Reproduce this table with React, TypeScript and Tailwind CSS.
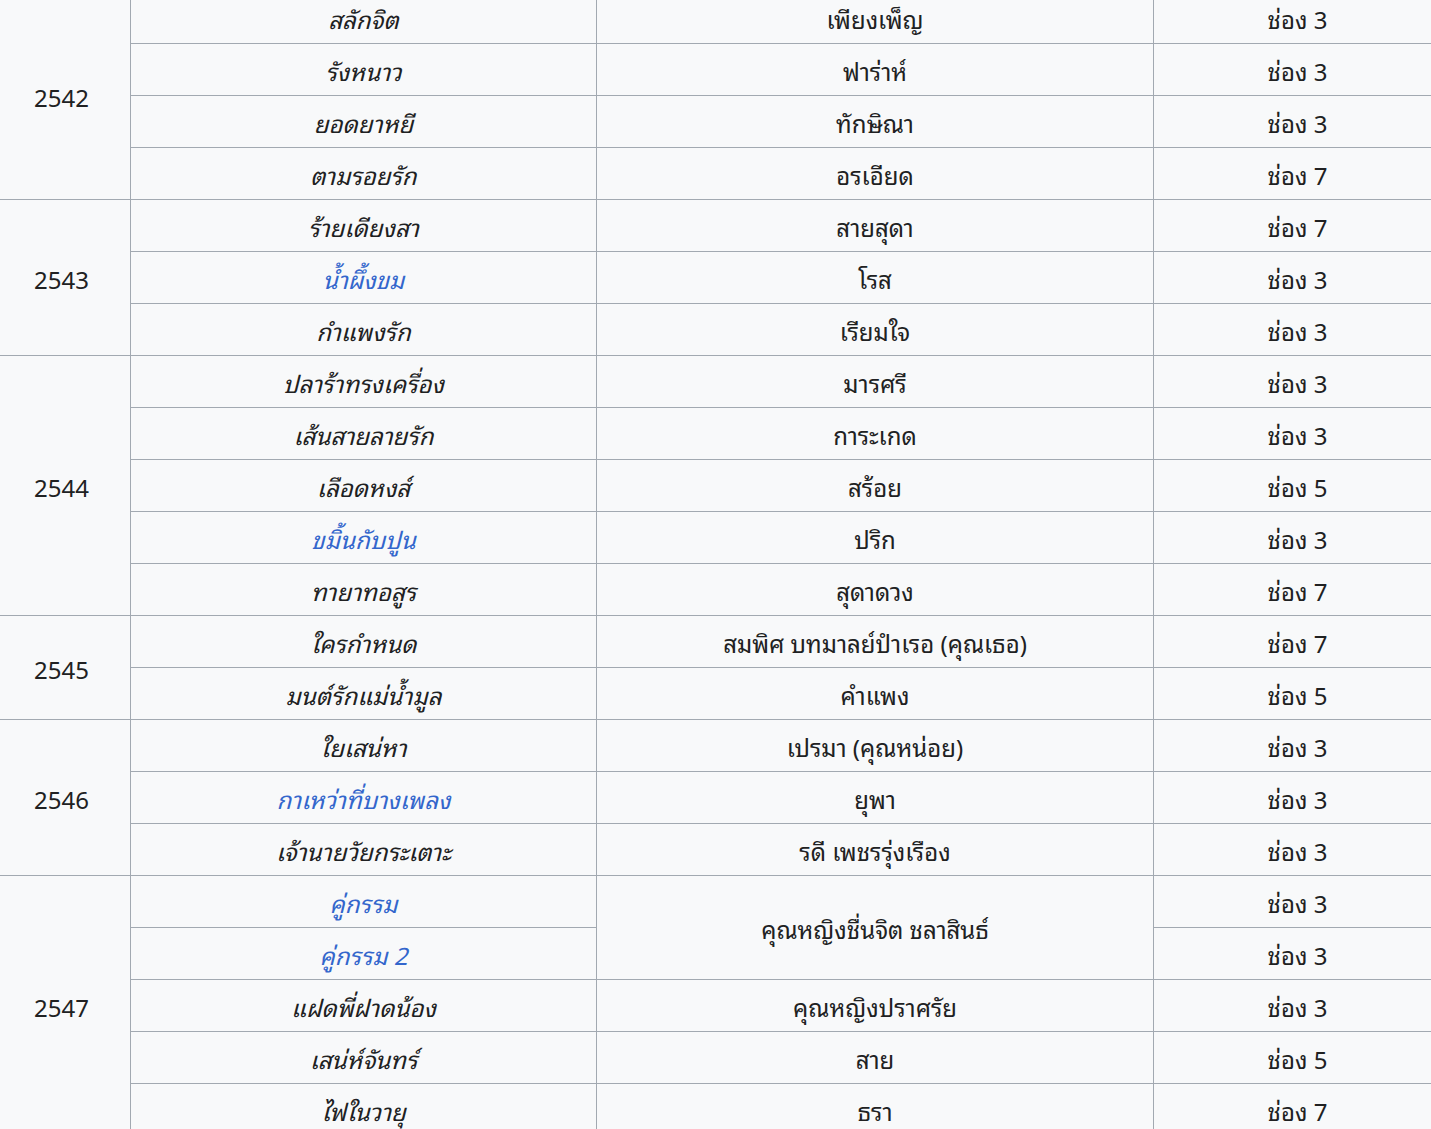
type Row = {
  title: string;
  link?: boolean;
  role?: string;
  roleSpan?: number;
  channel: string;
};

type Group = { year: string; rows: Row[] };

const GROUPS: Group[] = [
  {
    year: "2542",
    rows: [
      { title: "สลักจิต", role: "เพียงเพ็ญ", channel: "ช่อง 3" },
      { title: "รังหนาว", role: "ฟาร่าห์", channel: "ช่อง 3" },
      { title: "ยอดยาหยี", role: "ทักษิณา", channel: "ช่อง 3" },
      { title: "ตามรอยรัก", role: "อรเอียด", channel: "ช่อง 7" },
    ],
  },
  {
    year: "2543",
    rows: [
      { title: "ร้ายเดียงสา", role: "สายสุดา", channel: "ช่อง 7" },
      { title: "น้ำผึ้งขม", link: true, role: "โรส", channel: "ช่อง 3" },
      { title: "กำแพงรัก", role: "เรียมใจ", channel: "ช่อง 3" },
    ],
  },
  {
    year: "2544",
    rows: [
      { title: "ปลาร้าทรงเครื่อง", role: "มารศรี", channel: "ช่อง 3" },
      { title: "เส้นสายลายรัก", role: "การะเกด", channel: "ช่อง 3" },
      { title: "เลือดหงส์", role: "สร้อย", channel: "ช่อง 5" },
      { title: "ขมิ้นกับปูน", link: true, role: "ปริก", channel: "ช่อง 3" },
      { title: "ทายาทอสูร", role: "สุดาดวง", channel: "ช่อง 7" },
    ],
  },
  {
    year: "2545",
    rows: [
      { title: "ใครกำหนด", role: "สมพิศ บทมาลย์ปำเรอ (คุณเธอ)", channel: "ช่อง 7" },
      { title: "มนต์รักแม่น้ำมูล", role: "คำแพง", channel: "ช่อง 5" },
    ],
  },
  {
    year: "2546",
    rows: [
      { title: "ใยเสน่หา", role: "เปรมา (คุณหน่อย)", channel: "ช่อง 3" },
      { title: "กาเหว่าที่บางเพลง", link: true, role: "ยุพา", channel: "ช่อง 3" },
      { title: "เจ้านายวัยกระเตาะ", role: "รดี เพชรรุ่งเรือง", channel: "ช่อง 3" },
    ],
  },
  {
    year: "2547",
    rows: [
      { title: "คู่กรรม", link: true, role: "คุณหญิงชื่นจิต ชลาสินธ์", roleSpan: 2, channel: "ช่อง 3" },
      { title: "คู่กรรม 2", link: true, channel: "ช่อง 3" },
      { title: "แฝดพี่ฝาดน้อง", role: "คุณหญิงปราศรัย", channel: "ช่อง 3" },
      { title: "เสน่ห์จันทร์", role: "สาย", channel: "ช่อง 5" },
      { title: "ไฟในวายุ", role: "ธรา", channel: "ช่อง 7" },
    ],
  },
];

const cell = "border border-[#a2a9b1] bg-[#f8f9fa] text-center align-middle h-[52px] p-0 pt-[1px]";

export default function App() {
  return (
    <div
      className="w-[1431px] h-[1129px] overflow-hidden bg-white text-[#202122] text-[24px]"
      style={{
        fontFamily:
          "Tahoma, 'Noto Sans Thai Looped', 'Noto Sans Thai', 'Noto Sans', 'DejaVu Sans', sans-serif",
      }}
    >
      <table className="border-collapse -mt-[9px] -ml-[8px] w-[1450px] table-fixed">
        <colgroup>
          <col className="w-[138px]" />
          <col className="w-[466px]" />
          <col className="w-[557px]" />
          <col />
        </colgroup>
        <tbody>
          {GROUPS.map((g) =>
            g.rows.map((r, i) => (
              <tr key={g.year + r.title}>
                {i === 0 && (
                  <td rowSpan={g.rows.length} className={cell}>
                    {g.year}
                  </td>
                )}
                <td className={`${cell} italic`}>
                  {r.link ? <a className="text-[#3366cc]">{r.title}</a> : r.title}
                </td>
                {r.role !== undefined && (
                  <td rowSpan={r.roleSpan ?? 1} className={cell}>
                    {r.role}
                  </td>
                )}
                <td className={cell}>{r.channel}</td>
              </tr>
            ))
          )}
        </tbody>
      </table>
    </div>
  );
}
